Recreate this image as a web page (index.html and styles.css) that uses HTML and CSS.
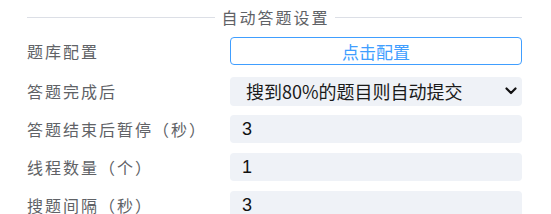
FILE: index.html
```html
<!DOCTYPE html>
<html lang="zh-CN">

<head>
    <meta charset="UTF-8">
    <meta name="viewport" content="width=device-width, initial-scale=1.0">
    <title>自动答题设置</title>
    <link rel="stylesheet" href="styles.css">
</head>

<body>
    <div class="panel">
        <div class="divider">
            <span class="divider-line"></span>
            <span class="divider-text">自动答题设置</span>
            <span class="divider-line"></span>
        </div>

        <div class="row row-first">
            <label class="label">题库配置</label>
            <button class="config-button">点击配置</button>
        </div>

        <div class="row">
            <label class="label">答题完成后</label>
            <div class="select-wrap">
                <select class="field select">
                    <option>搜到80%的题目则自动提交</option>
                    <option>全部搜到才自动提交</option>
                    <option>不自动提交</option>
                </select>
                <svg class="select-arrow" width="12" height="8" viewBox="0 0 12 8">
                    <path d="M1.5 1.5 L6 6 L10.5 1.5" fill="none" stroke="#111" stroke-width="2.2" stroke-linecap="round" stroke-linejoin="round"/>
                </svg>
            </div>
        </div>

        <div class="row">
            <label class="label">答题结束后暂停（秒）</label>
            <input class="field" type="text" value="3">
        </div>

        <div class="row">
            <label class="label">线程数量（个）</label>
            <input class="field" type="text" value="1">
        </div>

        <div class="row">
            <label class="label">搜题间隔（秒）</label>
            <input class="field" type="text" value="3">
        </div>
    </div>
</body>

</html>
```

FILE: styles.css
```css
body {
    margin: 0;
    background-color: #fff;
    font-family: 'Noto Sans CJK SC', 'Noto Sans', sans-serif;
    overflow: hidden;
}

.panel {
    width: 495px;
    padding: 2px 0 0 27px;
}

.divider {
    display: flex;
    align-items: center;
    gap: 7px;
    height: 30px;
}

.divider-line {
    flex: 1;
    height: 1px;
    background-color: #dcdfe6;
}

.divider-text {
    font-size: 16px;
    letter-spacing: 2px;
    margin-right: -2px;
    color: #5f6266;
    line-height: 1;
}

.row {
    display: flex;
    align-items: center;
    height: 38px;
}

.row-first {
    margin-bottom: 2px;
}

.label {
    width: 203px;
    flex-shrink: 0;
    font-size: 16px;
    letter-spacing: 2px;
    color: #606266;
}

.config-button {
    flex: 1;
    height: 28px;
    background-color: #fff;
    border: 1px solid #409eff;
    border-radius: 4px;
    color: #409eff;
    font-family: 'Noto Sans CJK SC', sans-serif;
    font-size: 17px;
    padding: 0;
    cursor: pointer;
}

.field {
    flex: 1;
    min-width: 0;
    height: 28px;
    box-sizing: border-box;
    border: none;
    border-radius: 4px;
    background-color: #eff2f7;
    padding: 0 12px;
    font-family: 'Liberation Sans', 'Noto Sans CJK SC', sans-serif;
    font-size: 18px;
    color: #111;
    outline: none;
}

.select-wrap {
    flex: 1;
    display: flex;
    position: relative;
}

.select {
    height: 29px;
    padding: 0 30px 0 16px;
    appearance: none;
    -webkit-appearance: none;
    font-family: 'Noto Sans CJK SC', sans-serif;
    color: #1a1a1a;
}

.select-arrow {
    position: absolute;
    right: 5px;
    top: 10px;
    pointer-events: none;
}
```
